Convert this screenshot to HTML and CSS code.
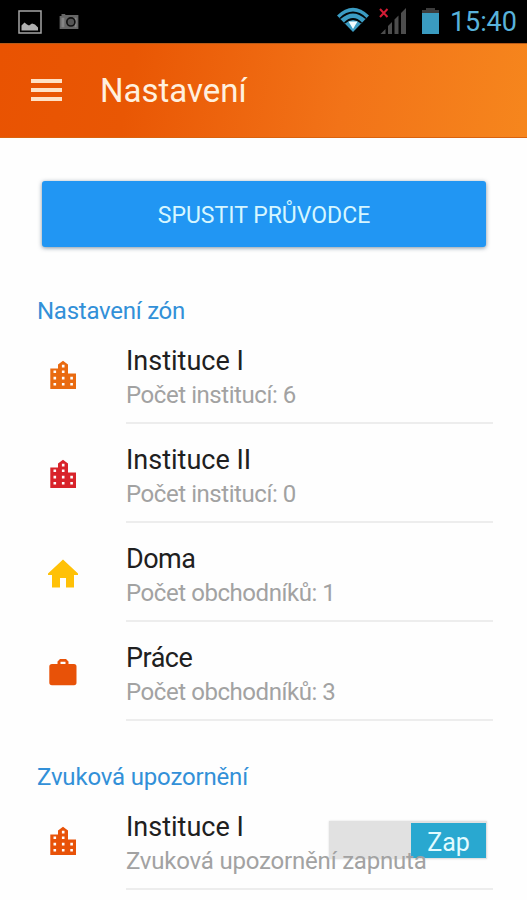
FILE: index.html
```
<!DOCTYPE html>
<html lang="cs">
<head>
<meta charset="utf-8">
<title>Nastavení</title>
<link rel="stylesheet" href="styles.css">
</head>
<body>
<svg class="defs" width="0" height="0" aria-hidden="true">
  <symbol id="city" viewBox="0 0 35 35"><path fill-rule="evenodd" d="M5.300 9.500H13V5.500L18 1.800l5 3.700v9h8V30H5.300zM8.500 11.500v2.600h2.600v-2.600zM8.500 17.800v2.600h2.600v-2.600zM8.500 24v2.600h2.600V24zM16.900 5.800v2.600h2.600V5.800zM16.900 11.500v2.600h2.600v-2.600zM16.900 17.800v2.600h2.600v-2.600zM16.900 24v2.600h2.600V24zM25.300 17.800v2.600h2.600v-2.600zM25.300 24v2.600h2.600V24z"/></symbol>
  <symbol id="home" viewBox="0 0 35 35"><path d="M18 2.500L33 16.500V18h-4v12.500h-8V21h-6v9.500H7V18H3v-1.500z"/></symbol>
  <symbol id="work" viewBox="0 0 35 35"><path fill-rule="evenodd" d="M12.500 8V5.500l2.500-2.500h6l2.500 2.500V8H29q2.500 0 2.500 2.500v16q0 2.700-2.500 2.700H7q-2.700 0-2.700-2.700v-16Q4.300 8 7 8zm3 0h5V5.700h-5z"/></symbol>
</svg>
<div class="status">
  <svg class="picture" viewBox="0 0 24 24"><path d="M1 1h22v22H1z" fill="none" stroke="#a5a5a5" stroke-width="1.500"/><path d="M3.500 20.500v-5l3-3 2.500 2 2 1 3-2 3 1 3 3v3z" fill="#b0b0b0"/></svg>
  <svg class="camera" viewBox="0 0 20 16"><path d="M0 2h2V0h4v1h14v15H0z" fill="#666"/><path d="M2 4h3v10H2zM16 4h2v10h-2z" fill="#858585"/><circle cx="12" cy="8.500" r="4.300" fill="#555" stroke="#111" stroke-width="1.800"/></svg>
  <svg class="wifi" viewBox="0 0 34 26"><path d="M1 8.500Q17-7 33 8.500L17 25z" fill="#3b9cc3"/><path d="M4 11.500Q17-.5 30 11.500M8.500 16Q17 8 25.500 16" fill="none" stroke="#020608" stroke-width="1.700"/><path d="M12.500 14.500h9L17 22z" fill="#effcff"/></svg>
  <svg class="signal" viewBox="0 0 28 27"><path d="M1.500 26l5-5v5zM9 18l4-4v12H9zM15.500 11.500l4-4V26h-4zM22 5l5-5v26h-5z" fill="#4d4d4d"/><path d="M1 1l7.500 8M8.500 1L1 9" stroke="#d51c35" stroke-width="2" fill="none"/></svg>
  <svg class="battery" viewBox="0 0 17 26"><path d="M4 0h9v2h4v4H0V2h4z" fill="#3d3d3d"/><path d="M0 5h17v21H0z" fill="#3a9bc0"/></svg>
  <span class="clock">15:40</span>
</div>
<header class="bar">
  <div class="menu"><i></i><i></i><i></i></div>
  <h1>Nastavení</h1>
</header>
<main>
  <button class="start"><span>SPUSTIT PRŮVODCE</span></button>
  <h2>Nastavení zón</h2>
  <section class="row">
    <svg class="icon orange"><use href="#city"/></svg>
    <div class="body"><h3>Instituce I</h3><p>Počet institucí: 6</p></div>
  </section>
  <section class="row">
    <svg class="icon red"><use href="#city"/></svg>
    <div class="body"><h3>Instituce II</h3><p>Počet institucí: 0</p></div>
  </section>
  <section class="row">
    <svg class="icon yellow"><use href="#home"/></svg>
    <div class="body"><h3 class="tight">Doma</h3><p>Počet obchodníků: 1</p></div>
  </section>
  <section class="row">
    <svg class="icon deep"><use href="#work"/></svg>
    <div class="body"><h3 class="tight">Práce</h3><p>Počet obchodníků: 3</p></div>
  </section>
  <h2 class="second">Zvuková upozornění</h2>
  <section class="row">
    <svg class="icon deep"><use href="#city"/></svg>
    <div class="body"><h3>Instituce I</h3><div class="switch"><span>Zap</span></div><p class="wide">Zvuková upozornění zapnuta</p></div>
  </section>
</main>
</body>
</html>
```
FILE: styles.css
```
* { box-sizing: border-box; margin: 0; padding: 0; }
body { width: 527px; height: 900px; overflow: hidden; background: #fefefe; font-family: Roboto, "Liberation Sans", sans-serif; }
.defs { display: block; height: 0; }
h1, h2, h3 { font-weight: 400; }
h1, h2, h3, p, span { white-space: nowrap; }
.status { height: 43px; background: #000; display: flex; align-items: flex-start; padding-left: 18px; }
.status svg { flex: none; }
.picture { width: 24px; height: 24px; margin-top: 10px; }
.camera { width: 20px; height: 15px; margin: 14px 0 0 17px; }
.wifi { width: 34px; height: 26px; margin: 7px 0 0 257px; }
.signal { width: 28px; height: 27px; margin: 8px 0 0 9px; }
.battery { width: 17px; height: 26px; margin: 8px 0 0 15px; }
.clock { margin: 6px 0 0 11px; font-size: 27px; line-height: 33px; letter-spacing: -.1px; color: #58b2db; }
.bar { height: 95px; display: flex; align-items: center; padding: 1px 0 0 31px; border-top: 1px solid #b65a18; border-bottom: 1px solid #d9630f; background: linear-gradient(100deg, #e95302 0%, #e95704 25%, #f27318 65%, #f6861d 100%); }
.menu { width: 31px; display: flex; flex-direction: column; gap: 5px; margin: -2px 38px 0 0; }
.menu i { height: 4px; background: #ffe1c5; }
h1 { font-size: 33px; line-height: 40px; color: #fff0df; }
main { padding: 43px 34px 0 37px; }
.start { display: flex; align-items: center; justify-content: center; width: 444px; height: 66px; margin-left: 5px; padding-top: 2px; border: 0; border-radius: 3px; background: #2196f3; box-shadow: 0 1px 4px rgba(0, 40, 70, .5); font: 400 23px Roboto, sans-serif; color: #d6f6ff; }
h2 { height: 30px; margin-top: 49px; font-size: 24px; line-height: 30px; letter-spacing: -.25px; color: #3290d8; }
h2.second { margin-top: 41px; letter-spacing: -.17px; }
.row { position: relative; height: 99px; display: flex; }
h2 + .row { margin-top: -1px; }
.icon { flex: none; width: 35px; height: 35px; margin: 34px 46px 0 8px; }
.orange { fill: #e96a10; }
.red { fill: #d8232a; }
.yellow { fill: #ffc107; }
.deep { fill: #e85208; }
.body { flex: 1; padding-top: 19px; border-bottom: 2px solid #ededed; }
h3 { font-size: 27px; line-height: 34px; color: #202020; }
h3.tight { letter-spacing: -.5px; }
.body p { position: relative; font-size: 24px; line-height: 34px; letter-spacing: -.44px; color: #a2a2a2; }
.body p.wide { letter-spacing: -.2px; }
.switch { position: absolute; top: 30px; right: 6px; width: 158px; height: 38px; padding: 2px 1px 1px 82px; background: #e1e1e1; box-shadow: 0 0 2px #ddd; }
.switch span { display: block; height: 35px; background: #29a8d0; color: #e2fbff; font-size: 25px; line-height: 39px; text-align: center; }
```
